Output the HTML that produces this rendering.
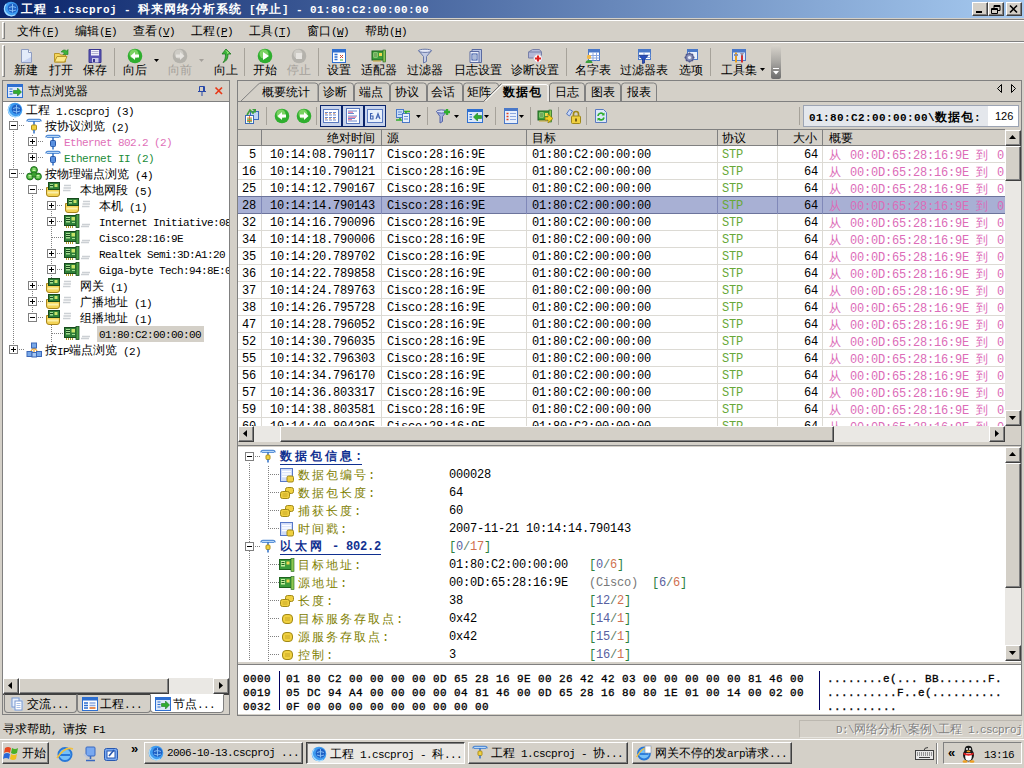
<!DOCTYPE html><html><head><meta charset="utf-8"><title>Colasoft</title><style>
*{box-sizing:border-box;margin:0;padding:0}
html,body{width:1024px;height:768px;overflow:hidden;background:#D4D0C8}
body{position:relative;font-family:"Liberation Mono",monospace;font-size:10px;color:#000;line-height:12px}
.a{position:absolute}
.c{font-family:"Liberation Sans",sans-serif;font-size:12px;letter-spacing:0}
.tr .c{position:relative;top:-1px}
.s{font-family:"Liberation Mono",monospace;font-size:11px;letter-spacing:-.6px;white-space:nowrap;line-height:12px}
.m{font-family:"Liberation Mono",monospace;font-size:12px;letter-spacing:-0.2px;white-space:nowrap}
.m .c{letter-spacing:2px}
.b{font-weight:bold}
.raised{border:1px solid;border-color:#fff #404040 #404040 #fff;box-shadow:inset -1px -1px 0 #808080,inset 1px 1px 0 #D4D0C8;background:#D4D0C8}
.sunken{border:1px solid;border-color:#808080 #fff #fff #808080}
.dither{background:#EAE8E4}
svg{position:absolute;overflow:visible}
</style></head><body>
<div class="a" style="left:0;top:0;width:1024px;height:18px;background:linear-gradient(90deg,#0A246A,#A6CAF0)"></div>
<div class="a" style="left:0;top:19px;width:1024px;height:1px;background:#808080"></div><div class="a" style="left:0;top:20px;width:1024px;height:1px;background:#fff"></div>
<svg style="left:3px;top:1px" width="16" height="16" viewBox="0 0 16 16"><circle cx="8" cy="8" r="7.300" fill="#3E9CF0"/><circle cx="9.500" cy="7.200" r="4.800" fill="#1E60C4"/><path d="M6 6.500q3.500-2 7 0M6 9q3.500 2 7 0M9.500 3v8.500" stroke="#8CC4F8" stroke-width=".9" fill="none"/><path d="M3.200 3.200a7 7 0 0 0 9 10.500" stroke="#A8DCFF" stroke-width="1.300" fill="none"/></svg>
<div class="a b" style="left:21px;top:3px;color:#fff;font-size:11px;letter-spacing:0.4px;white-space:nowrap;line-height:12px"><span class="c" style="letter-spacing:1px;font-weight:bold">工程</span>&nbsp;1.cscproj&nbsp;-&nbsp;<span class="c" style="letter-spacing:1px;font-weight:bold">科来网络分析系统</span>&nbsp;[<span class="c" style="letter-spacing:1px;font-weight:bold">停止</span>]&nbsp;-&nbsp;01:80:C2:00:00:00</div>
<div class="a raised" style="left:972px;top:2px;width:16px;height:14px"></div>
<div class="a" style="left:976px;top:11px;width:6px;height:2px;background:#000"></div>
<div class="a raised" style="left:988px;top:2px;width:16px;height:14px"></div>
<svg style="left:988px;top:2px" width="16" height="14"><path d="M6 3.5h6v5h-6zM6 4.5h6" stroke="#000" fill="none"/><path d="M3.5 6.5h6v5h-6z" fill="#D4D0C8" stroke="#000"/><path d="M3.5 7.5h6" stroke="#000"/></svg>
<div class="a raised" style="left:1006px;top:2px;width:16px;height:14px"></div>
<svg style="left:1006px;top:2px" width="16" height="14"><path d="M4 3.5l7 7M11 3.5l-7 7" stroke="#000" stroke-width="1.6"/></svg>
<div class="a" style="left:0;top:41px;width:1024px;height:1px;background:#808080"></div><div class="a" style="left:0;top:42px;width:1024px;height:1px;background:#fff"></div>
<div class="a" style="left:2px;top:22px;width:3px;height:17px;border:1px solid;border-color:#fff #808080 #808080 #fff"></div>
<div class="a s" style="left:17px;top:25px"><span class="c">文件</span>(<u>F</u>)</div>
<div class="a s" style="left:75px;top:25px"><span class="c">编辑</span>(<u>E</u>)</div>
<div class="a s" style="left:133px;top:25px"><span class="c">查看</span>(<u>V</u>)</div>
<div class="a s" style="left:191px;top:25px"><span class="c">工程</span>(<u>P</u>)</div>
<div class="a s" style="left:249px;top:25px"><span class="c">工具</span>(<u>T</u>)</div>
<div class="a s" style="left:307px;top:25px"><span class="c">窗口</span>(<u>W</u>)</div>
<div class="a s" style="left:365px;top:25px"><span class="c">帮助</span>(<u>H</u>)</div>
<div class="a" style="left:2px;top:45px;width:3px;height:32px;border:1px solid;border-color:#fff #808080 #808080 #fff"></div>
<div class="a" style="left:114px;top:48px;width:1px;height:28px;background:#A6A29A"></div>
<div class="a" style="left:244px;top:48px;width:1px;height:28px;background:#A6A29A"></div>
<div class="a" style="left:318px;top:48px;width:1px;height:28px;background:#A6A29A"></div>
<div class="a" style="left:566px;top:48px;width:1px;height:28px;background:#A6A29A"></div>
<div class="a" style="left:710px;top:48px;width:1px;height:28px;background:#A6A29A"></div>
<svg style="left:18px;top:48px" width="16" height="16" viewBox="0 0 16 16" ><path d="M3.5 1.5h7l3 3v10h-10z" fill="#E3EBFA" stroke="#8E9CC0"/><path d="M10.5 1.5v3h3" fill="#fff" stroke="#8E9CC0"/><path d="M4 14h9V9z" fill="#B9C8EC" opacity=".7"/></svg>
<div class="a c" style="left:14px;top:64px;color:#000;white-space:nowrap;line-height:12px">新建</div>
<svg style="left:53px;top:48px" width="16" height="16" viewBox="0 0 16 16" ><path d="M1.5 5.5h5l1 1.5h5v7h-11z" fill="#F5D65A" stroke="#B8962A"/><path d="M1.5 14l2.5-5.5h10l-2.5 5.5z" fill="#FBE88A" stroke="#B8962A"/><path d="M8 4c2-2.5 4-2.5 5.5-1l1.5-1.5v5h-5l1.5-1.5c-1-1-2-1-3.5-1z" fill="#3CB43C" stroke="#1E7A1E" stroke-width=".6"/></svg>
<div class="a c" style="left:49px;top:64px;color:#000;white-space:nowrap;line-height:12px">打开</div>
<svg style="left:87px;top:48px" width="16" height="16" viewBox="0 0 16 16" ><path d="M2 1.5h12v13h-12z" fill="#5A55B4" stroke="#3A3690"/><rect x="4" y="2" width="8" height="5.5" fill="#F2F2FA"/><path d="M4.5 3.5h7M4.5 5.5h7" stroke="#B0B0D0"/><rect x="5" y="10" width="6.5" height="4.5" fill="#C8C8E8"/><rect x="6" y="11" width="2" height="3" fill="#3A3690"/></svg>
<div class="a c" style="left:83px;top:64px;color:#000;white-space:nowrap;line-height:12px">保存</div>
<svg style="left:127px;top:48px" width="16" height="16" viewBox="0 0 16 16" ><circle cx="8" cy="8" r="7.3" fill="#2FAE2F"/><circle cx="7" cy="6" r="4.5" fill="#B8F08C" opacity=".55"/><path d="M3.5 8l4.5-4v2.5h4v3h-4v2.5z" fill="#fff"/></svg>
<div class="a c" style="left:123px;top:64px;color:#000;white-space:nowrap;line-height:12px">向后</div>
<svg style="left:172px;top:48px" width="16" height="16" viewBox="0 0 16 16" ><circle cx="8" cy="8" r="7.3" fill="#B4B2AC"/><circle cx="7" cy="6" r="4.5" fill="#E4E2DC" opacity=".55"/><path d="M12.5 8l-4.5-4v2.5h-4v3h4v2.5z" fill="#E6E4E0"/></svg>
<div class="a c" style="left:168px;top:64px;color:#A4A09A;white-space:nowrap;line-height:12px">向前</div>
<svg style="left:218px;top:48px" width="16" height="16" viewBox="0 0 16 16" ><path d="M8 1l5 5h-3c0 4-1 7-5 8.500c2-2 2.500-4.500 2.500-8.500h-3.500z" fill="#3CB43C" stroke="#1E7A1E" stroke-width=".8"/><path d="M8 2.500l2.500 2.500h-1.500" stroke="#B8F08C" fill="none"/></svg>
<div class="a c" style="left:214px;top:64px;color:#000;white-space:nowrap;line-height:12px">向上</div>
<svg style="left:257px;top:48px" width="16" height="16" viewBox="0 0 16 16" ><circle cx="8" cy="8" r="7.3" fill="#2FAE2F"/><circle cx="7" cy="6" r="4.5" fill="#B8F08C" opacity=".55"/><path d="M6 4l6 4l-6 4z" fill="#fff"/></svg>
<div class="a c" style="left:253px;top:64px;color:#000;white-space:nowrap;line-height:12px">开始</div>
<svg style="left:291px;top:48px" width="16" height="16" viewBox="0 0 16 16" ><circle cx="8" cy="8" r="7.3" fill="#B4B2AC"/><circle cx="7" cy="6" r="4.5" fill="#E4E2DC" opacity=".55"/><rect x="5" y="5" width="6" height="6" fill="#E6E4E0"/></svg>
<div class="a c" style="left:287px;top:64px;color:#A4A09A;white-space:nowrap;line-height:12px">停止</div>
<svg style="left:331px;top:48px" width="16" height="16" viewBox="0 0 16 16" ><rect x="1.500" y="1.500" width="13" height="13" fill="#fff" stroke="#2E6FD0"/><rect x="1.500" y="1.500" width="13" height="3" fill="#2E6FD0"/><path d="M3.500 6.500h3M3.500 9h3M3.500 11.500h3" stroke="#2E6FD0" stroke-width="1.500"/><path d="M9 7l3 3M12 7l-3 3" stroke="#D04A2E"/><path d="M9 12h3" stroke="#3CB43C"/></svg>
<div class="a c" style="left:327px;top:64px;color:#000;white-space:nowrap;line-height:12px">设置</div>
<svg style="left:371px;top:48px" width="16" height="16" viewBox="0 0 16 16" ><rect x="1" y="3" width="13" height="9" fill="#3C9C3C" stroke="#1E641E"/><rect x="2.500" y="4.500" width="4" height="5" fill="#C8F0A0"/><path d="M3 6h3M3 8h3" stroke="#1E641E"/><rect x="8" y="5" width="3" height="3" fill="#F0D850"/><rect x="12" y="2" width="2.500" height="12" fill="#8CC850" stroke="#1E641E" stroke-width=".6"/><path d="M3 12v2M5 12v2M7 12v2M9 12v2" stroke="#C8A830"/></svg>
<div class="a c" style="left:361px;top:64px;color:#000;white-space:nowrap;line-height:12px">适配器</div>
<svg style="left:417px;top:48px" width="16" height="16" viewBox="0 0 16 16" ><path d="M1.500 2.500h13l-5 6v5l-3 1.500v-6.500z" fill="#C4CCE4" stroke="#6878A8"/><ellipse cx="8" cy="2.800" rx="6.500" ry="1.600" fill="#E8ECF8" stroke="#6878A8"/></svg>
<div class="a c" style="left:407px;top:64px;color:#000;white-space:nowrap;line-height:12px">过滤器</div>
<svg style="left:468px;top:48px" width="16" height="16" viewBox="0 0 16 16" ><path d="M4 1.500h9.500v13h-9.500z" fill="#B8C4E4" stroke="#5A6AA0"/><path d="M2 3.500h9v11h-9z" fill="#E8ECF8" stroke="#5A6AA0"/><rect x="4" y="6" width="5" height="6" fill="#fff" stroke="#2E50A0"/><path d="M5 8h3M5 10h3" stroke="#2E50A0" stroke-width=".8"/></svg>
<div class="a c" style="left:454px;top:64px;color:#000;white-space:nowrap;line-height:12px">日志设置</div>
<svg style="left:527px;top:48px" width="16" height="16" viewBox="0 0 16 16" ><path d="M1.500 4l4-2.500h7l2 2.500v6h-13z" fill="#B4B8D8" stroke="#7880A8"/><path d="M1.500 4h13" stroke="#7880A8"/><circle cx="11" cy="10.500" r="4.200" fill="#fff" stroke="#C8C8D8"/><path d="M11 7.500v6M8 10.500h6" stroke="#E02020" stroke-width="2.200"/></svg>
<div class="a c" style="left:511px;top:64px;color:#000;white-space:nowrap;line-height:12px">诊断设置</div>
<svg style="left:585px;top:48px" width="16" height="16" viewBox="0 0 16 16" ><rect x="3.500" y="1.500" width="11" height="11" fill="#fff" stroke="#4A78C8"/><rect x="3.500" y="1.500" width="11" height="3" fill="#4A78C8"/><path d="M3.500 7.500h11M3.500 10h11M8 4.500v8M11.500 4.500v8" stroke="#8CA8E0"/><circle cx="4" cy="9" r="2.200" fill="#F0B848"/><path d="M.500 15c0-4 7-4 7 0z" fill="#3CA03C"/></svg>
<div class="a c" style="left:575px;top:64px;color:#000;white-space:nowrap;line-height:12px">名字表</div>
<svg style="left:636px;top:48px" width="16" height="16" viewBox="0 0 16 16" ><rect x="2.500" y="1.500" width="12" height="10" fill="#fff" stroke="#4A78C8"/><rect x="2.500" y="1.500" width="12" height="3" fill="#4A78C8"/><path d="M2.500 7h12M2.500 9.500h12M8 4.500v7" stroke="#8CA8E0"/><path d="M3 7.500h9l-3.500 4v3.500l-2 .500v-4z" fill="#2850C0" stroke="#102880" stroke-width=".7"/></svg>
<div class="a c" style="left:620px;top:64px;color:#000;white-space:nowrap;line-height:12px">过滤器表</div>
<svg style="left:683px;top:48px" width="16" height="16" viewBox="0 0 16 16" ><rect x="4.500" y="1.500" width="10" height="10" fill="#E8F0FC" stroke="#4A78C8"/><rect x="4.500" y="1.500" width="10" height="2.500" fill="#4A78C8"/><circle cx="6.500" cy="9.500" r="4" fill="#8890B8" stroke="#50588C"/><circle cx="6.500" cy="9.500" r="1.600" fill="#E8ECF8"/><path d="M6.500 4.500v2M6.500 12.500v2M1.500 9.500h2M9.500 9.500h2M3 6l1.300 1.300M10 13l-1.300-1.300M3 13l1.300-1.300M10 6l-1.300 1.300" stroke="#50588C" stroke-width="1.400"/></svg>
<div class="a c" style="left:679px;top:64px;color:#000;white-space:nowrap;line-height:12px">选项</div>
<svg style="left:731px;top:48px" width="16" height="16" viewBox="0 0 16 16" ><rect x="1.500" y="1.500" width="13" height="11" fill="#D8E6FA" stroke="#4A78C8"/><rect x="1.500" y="1.500" width="13" height="3" fill="#4A78C8"/><path d="M5 4.500v10" stroke="#E8A020" stroke-width="2"/><path d="M3 6h4v2h-4z" fill="#8890A8"/><path d="M11 5.500v9" stroke="#D03030" stroke-width="2"/><path d="M9.500 5l1.500 2l1.500-2" fill="none" stroke="#8890A8" stroke-width="1.200"/></svg>
<div class="a c" style="left:721px;top:64px;color:#000;white-space:nowrap;line-height:12px">工具集</div>
<svg style="left:154px;top:59px" width="5" height="3"><path d="M0 0h5l-2.500 3z" fill="#000"/></svg>
<svg style="left:199px;top:59px" width="5" height="3"><path d="M0 0h5l-2.500 3z" fill="#A4A09A"/></svg>
<svg style="left:760px;top:68px" width="5" height="3"><path d="M0 0h5l-2.500 3z" fill="#000"/></svg>
<div class="a" style="left:771px;top:45px;width:10px;height:34px;background:linear-gradient(180deg,#D8D4CC 0%,#A8A6A2 50%,#6C6C6C 100%);border-radius:2px"></div>
<svg style="left:773px;top:68px" width="6" height="8"><path d="M0 .500h6" stroke="#fff"/><path d="M0 3h6l-3 3.500z" fill="#fff"/></svg>
<div class="a" style="left:2px;top:80px;width:228px;height:22px;border:1px solid #808080;border-bottom:none;background:#D4D0C8"></div>
<svg style="left:7px;top:83px" width="16" height="16" viewBox="0 0 16 16" ><rect x=".500" y="1.500" width="15" height="13" fill="#DCE8FA" stroke="#2E6FD0"/><rect x=".500" y="1.500" width="15" height="2.500" fill="#2E6FD0"/><path d="M2.500 6h3M2.500 8.500h3M2.500 11h3" stroke="#2E6FD0"/><path d="M6.500 7.500h4v-2.500l4 4l-4 4v-2.500h-4z" fill="#2FAE2F" stroke="#1E7A1E" stroke-width=".6"/></svg>
<div class="a c" style="left:28px;top:85px;line-height:12px;white-space:nowrap">节点浏览器</div>
<svg style="left:197px;top:85px" width="10" height="12"><path d="M2.500 1.500h5v5h-5zM6.500 1.500v5M1 6.500h8M5 7v4" stroke="#2848A8" fill="none"/></svg>
<svg style="left:214px;top:86px" width="10" height="10"><path d="M1.500 1.500l6.500 6.500M8 1.500l-6.500 6.500" stroke="#E83818" stroke-width="1.700"/></svg>
<div class="a" style="left:2px;top:101px;width:228px;height:614px;border:1px solid #808080;background:#D4D0C8"></div>
<div class="a" style="left:3px;top:102px;width:226px;height:576px;background:#fff;overflow:hidden">
<div class="a" style="left:10px;top:17px;width:1px;height:230px;background:repeating-linear-gradient(180deg,#808080 0 1px,transparent 1px 2px)"></div>
<div class="a" style="left:29px;top:33px;width:1px;height:24px;background:repeating-linear-gradient(180deg,#808080 0 1px,transparent 1px 2px)"></div>
<div class="a" style="left:29px;top:89px;width:1px;height:130px;background:repeating-linear-gradient(180deg,#808080 0 1px,transparent 1px 2px)"></div>
<div class="a" style="left:48px;top:105px;width:1px;height:76px;background:repeating-linear-gradient(180deg,#808080 0 1px,transparent 1px 2px)"></div>
<div class="a" style="left:48px;top:217px;width:1px;height:24px;background:repeating-linear-gradient(180deg,#808080 0 1px,transparent 1px 2px)"></div>
<svg style="left:4px;top:0px" width="16" height="16" viewBox="0 0 16 16" ><circle cx="8" cy="8" r="7.300" fill="#3E9CF0"/><circle cx="9.500" cy="7.200" r="4.800" fill="#1E60C4"/><path d="M6 6.500q3.500-2 7 0M6 9q3.500 2 7 0M9.500 3v8.500" stroke="#8CC4F8" stroke-width=".9" fill="none"/><path d="M3.200 3.200a7 7 0 0 0 9 10.500" stroke="#A8DCFF" stroke-width="1.300" fill="none"/></svg>
<div class="a s tr" style="left:23px;top:3px;color:#000"><span class="c">工程</span>&nbsp;1.cscproj&nbsp;(3)</div>
<div class="a" style="left:6px;top:19px;width:9px;height:9px;border:1px solid #808080;background:#fff"></div><div class="a" style="left:8px;top:23px;width:5px;height:1px;background:#000"></div>
<div class="a" style="left:16px;top:23px;width:6px;height:1px;background:repeating-linear-gradient(90deg,#808080 0 1px,transparent 1px 2px)"></div>
<svg style="left:23px;top:16px" width="16" height="16" viewBox="0 0 16 16" ><path d="M1 3.500q0-2 2-2h10q2 0 2 2" stroke="#4C88D4" stroke-width="1.400" fill="none"/><path d="M2.500 2.500h11" stroke="#B8D8F8" stroke-width="1.200"/><path d="M2 3.500h12" stroke="#4C88D4" stroke-width=".9"/><path d="M8 3v4" stroke="#3C78C8" stroke-width="1.600"/><rect x="5.500" y="7" width="5" height="5" rx="1" fill="#F0D040" stroke="#B09018"/><path d="M8 12v3.500" stroke="#3C78C8" stroke-width="1.600"/></svg>
<div class="a s tr" style="left:42px;top:19px;color:#000"><span class="c">按协议浏览</span>&nbsp;(2)</div>
<div class="a" style="left:25px;top:35px;width:9px;height:9px;border:1px solid #808080;background:#fff"></div><div class="a" style="left:27px;top:39px;width:5px;height:1px;background:#000"></div><div class="a" style="left:29px;top:37px;width:1px;height:5px;background:#000"></div>
<div class="a" style="left:35px;top:39px;width:6px;height:1px;background:repeating-linear-gradient(90deg,#808080 0 1px,transparent 1px 2px)"></div>
<svg style="left:42px;top:32px" width="16" height="16" viewBox="0 0 16 16" ><path d="M1 3.500q0-2 2-2h10q2 0 2 2" stroke="#4C88D4" stroke-width="1.400" fill="none"/><path d="M2.500 2.500h11" stroke="#B8D8F8" stroke-width="1.200"/><path d="M2 3.500h12" stroke="#4C88D4" stroke-width=".9"/><path d="M8 3v4" stroke="#3C78C8" stroke-width="1.600"/><rect x="5.500" y="6.500" width="5" height="6" rx="1" fill="#5890E0" stroke="#2858A8"/><path d="M8 12.500v3" stroke="#3C78C8" stroke-width="1.600"/></svg>
<div class="a s tr" style="left:61px;top:35px;color:#E070B8">Ethernet&nbsp;802.2&nbsp;(2)</div>
<div class="a" style="left:25px;top:51px;width:9px;height:9px;border:1px solid #808080;background:#fff"></div><div class="a" style="left:27px;top:55px;width:5px;height:1px;background:#000"></div><div class="a" style="left:29px;top:53px;width:1px;height:5px;background:#000"></div>
<div class="a" style="left:35px;top:55px;width:6px;height:1px;background:repeating-linear-gradient(90deg,#808080 0 1px,transparent 1px 2px)"></div>
<svg style="left:42px;top:48px" width="16" height="16" viewBox="0 0 16 16" ><path d="M1 3.500q0-2 2-2h10q2 0 2 2" stroke="#4C88D4" stroke-width="1.400" fill="none"/><path d="M2.500 2.500h11" stroke="#B8D8F8" stroke-width="1.200"/><path d="M2 3.500h12" stroke="#4C88D4" stroke-width=".9"/><path d="M8 3v4" stroke="#3C78C8" stroke-width="1.600"/><rect x="5.500" y="6.500" width="5" height="6" rx="1" fill="#5890E0" stroke="#2858A8"/><path d="M8 12.500v3" stroke="#3C78C8" stroke-width="1.600"/></svg>
<div class="a s tr" style="left:61px;top:51px;color:#208C38">Ethernet&nbsp;II&nbsp;(2)</div>
<div class="a" style="left:6px;top:67px;width:9px;height:9px;border:1px solid #808080;background:#fff"></div><div class="a" style="left:8px;top:71px;width:5px;height:1px;background:#000"></div>
<div class="a" style="left:16px;top:71px;width:6px;height:1px;background:repeating-linear-gradient(90deg,#808080 0 1px,transparent 1px 2px)"></div>
<svg style="left:23px;top:64px" width="16" height="16" viewBox="0 0 16 16" ><circle cx="8" cy="4" r="3.400" fill="#4CB83C" stroke="#1E6A1E"/><circle cx="4" cy="10.500" r="3.400" fill="#4CB83C" stroke="#1E6A1E"/><circle cx="12" cy="10.500" r="3.400" fill="#4CB83C" stroke="#1E6A1E"/><circle cx="8" cy="8.500" r="2.600" fill="#3CA030" stroke="#1E6A1E" stroke-width=".7"/><path d="M6.500 3h3M2.500 9.500h3M10.500 9.500h3M6.500 4.500h3M2.500 11h3M10.500 11h3" stroke="#D8F8B8" stroke-width=".9"/></svg>
<div class="a s tr" style="left:42px;top:67px;color:#000"><span class="c">按物理端点浏览</span>&nbsp;(4)</div>
<div class="a" style="left:25px;top:83px;width:9px;height:9px;border:1px solid #808080;background:#fff"></div><div class="a" style="left:27px;top:87px;width:5px;height:1px;background:#000"></div>
<div class="a" style="left:35px;top:87px;width:6px;height:1px;background:repeating-linear-gradient(90deg,#808080 0 1px,transparent 1px 2px)"></div>
<svg style="left:42px;top:80px" width="32" height="16" viewBox="0 0 32 16" ><path d="M1.500 5.500h13v6.500q0 2.500-2.500 2.500h-8q-2.500 0-2.500-2.500z" fill="#F4D456" stroke="#A8841C"/><path d="M2.500 10.500h11" stroke="#FBEFA8" stroke-width="2"/><rect x="3.500" y=".500" width="11" height="7" fill="#2F8038" stroke="#174A1C"/><rect x="5" y="2" width="3" height="3.500" fill="#A4DC90"/><path d="M5 3.500h3" stroke="#174A1C"/><rect x="9.500" y="2" width="3" height="3" fill="#C8E468"/><path d="M19 3.500h7M18.500 6h7.500M18 8.500h7.500" stroke="#CCD0D4" stroke-width="1.300"/></svg>
<div class="a s tr" style="left:77px;top:83px;color:#000"><span class="c">本地网段</span>&nbsp;(5)</div>
<div class="a" style="left:44px;top:99px;width:9px;height:9px;border:1px solid #808080;background:#fff"></div><div class="a" style="left:46px;top:103px;width:5px;height:1px;background:#000"></div><div class="a" style="left:48px;top:101px;width:1px;height:5px;background:#000"></div>
<div class="a" style="left:54px;top:103px;width:6px;height:1px;background:repeating-linear-gradient(90deg,#808080 0 1px,transparent 1px 2px)"></div>
<svg style="left:61px;top:96px" width="32" height="16" viewBox="0 0 32 16" ><path d="M1.500 5.500h13v6.500q0 2.500-2.500 2.500h-8q-2.500 0-2.500-2.500z" fill="#F4D456" stroke="#A8841C"/><path d="M2.500 10.500h11" stroke="#FBEFA8" stroke-width="2"/><rect x="3.500" y=".500" width="11" height="7" fill="#2F8038" stroke="#174A1C"/><rect x="5" y="2" width="3" height="3.500" fill="#A4DC90"/><path d="M5 3.500h3" stroke="#174A1C"/><rect x="9.500" y="2" width="3" height="3" fill="#C8E468"/><path d="M19 3.500h7M18.500 6h7.500M18 8.500h7.500" stroke="#CCD0D4" stroke-width="1.300"/></svg>
<div class="a s tr" style="left:96px;top:99px;color:#000"><span class="c">本机</span>&nbsp;(1)</div>
<div class="a" style="left:44px;top:115px;width:9px;height:9px;border:1px solid #808080;background:#fff"></div><div class="a" style="left:46px;top:119px;width:5px;height:1px;background:#000"></div><div class="a" style="left:48px;top:117px;width:1px;height:5px;background:#000"></div>
<div class="a" style="left:54px;top:119px;width:6px;height:1px;background:repeating-linear-gradient(90deg,#808080 0 1px,transparent 1px 2px)"></div>
<svg style="left:61px;top:112px" width="32" height="16" viewBox="0 0 32 16" ><rect x=".500" y="1.500" width="12.500" height="10" fill="#2F8038" stroke="#174A1C"/><rect x="2" y="3" width="4" height="5.500" fill="#A4DC90"/><path d="M2 4.500h4M2 6.500h4" stroke="#174A1C"/><rect x="7.500" y="3" width="3.500" height="3.500" fill="#C8E468"/><path d="M8 8.500h3" stroke="#A4DC90"/><rect x="12" y=".500" width="3" height="13" fill="#4CA048" stroke="#174A1C" stroke-width=".8"/><path d="M2.500 12v2M4.500 12v2M6.500 12v2M8.500 12v2" stroke="#B09828"/><path d="M18 10.500h8M17 12.500h8" stroke="#CCD0D4" stroke-width="1.300"/></svg>
<div class="a s tr" style="left:96px;top:115px;color:#000">Internet&nbsp;Initiative:08</div>
<div class="a" style="left:49px;top:135px;width:11px;height:1px;background:repeating-linear-gradient(90deg,#808080 0 1px,transparent 1px 2px)"></div>
<svg style="left:61px;top:128px" width="32" height="16" viewBox="0 0 32 16" ><rect x=".500" y="1.500" width="12.500" height="10" fill="#2F8038" stroke="#174A1C"/><rect x="2" y="3" width="4" height="5.500" fill="#A4DC90"/><path d="M2 4.500h4M2 6.500h4" stroke="#174A1C"/><rect x="7.500" y="3" width="3.500" height="3.500" fill="#C8E468"/><path d="M8 8.500h3" stroke="#A4DC90"/><rect x="12" y=".500" width="3" height="13" fill="#4CA048" stroke="#174A1C" stroke-width=".8"/><path d="M2.500 12v2M4.500 12v2M6.500 12v2M8.500 12v2" stroke="#B09828"/><path d="M18 10.500h8M17 12.500h8" stroke="#CCD0D4" stroke-width="1.300"/></svg>
<div class="a s tr" style="left:96px;top:131px;color:#000">Cisco:28:16:9E</div>
<div class="a" style="left:44px;top:147px;width:9px;height:9px;border:1px solid #808080;background:#fff"></div><div class="a" style="left:46px;top:151px;width:5px;height:1px;background:#000"></div><div class="a" style="left:48px;top:149px;width:1px;height:5px;background:#000"></div>
<div class="a" style="left:54px;top:151px;width:6px;height:1px;background:repeating-linear-gradient(90deg,#808080 0 1px,transparent 1px 2px)"></div>
<svg style="left:61px;top:144px" width="32" height="16" viewBox="0 0 32 16" ><rect x=".500" y="1.500" width="12.500" height="10" fill="#2F8038" stroke="#174A1C"/><rect x="2" y="3" width="4" height="5.500" fill="#A4DC90"/><path d="M2 4.500h4M2 6.500h4" stroke="#174A1C"/><rect x="7.500" y="3" width="3.500" height="3.500" fill="#C8E468"/><path d="M8 8.500h3" stroke="#A4DC90"/><rect x="12" y=".500" width="3" height="13" fill="#4CA048" stroke="#174A1C" stroke-width=".8"/><path d="M2.500 12v2M4.500 12v2M6.500 12v2M8.500 12v2" stroke="#B09828"/><path d="M18 10.500h8M17 12.500h8" stroke="#CCD0D4" stroke-width="1.300"/></svg>
<div class="a s tr" style="left:96px;top:147px;color:#000">Realtek&nbsp;Semi:3D:A1:20</div>
<div class="a" style="left:44px;top:163px;width:9px;height:9px;border:1px solid #808080;background:#fff"></div><div class="a" style="left:46px;top:167px;width:5px;height:1px;background:#000"></div><div class="a" style="left:48px;top:165px;width:1px;height:5px;background:#000"></div>
<div class="a" style="left:54px;top:167px;width:6px;height:1px;background:repeating-linear-gradient(90deg,#808080 0 1px,transparent 1px 2px)"></div>
<svg style="left:61px;top:160px" width="32" height="16" viewBox="0 0 32 16" ><rect x=".500" y="1.500" width="12.500" height="10" fill="#2F8038" stroke="#174A1C"/><rect x="2" y="3" width="4" height="5.500" fill="#A4DC90"/><path d="M2 4.500h4M2 6.500h4" stroke="#174A1C"/><rect x="7.500" y="3" width="3.500" height="3.500" fill="#C8E468"/><path d="M8 8.500h3" stroke="#A4DC90"/><rect x="12" y=".500" width="3" height="13" fill="#4CA048" stroke="#174A1C" stroke-width=".8"/><path d="M2.500 12v2M4.500 12v2M6.500 12v2M8.500 12v2" stroke="#B09828"/><path d="M18 10.500h8M17 12.500h8" stroke="#CCD0D4" stroke-width="1.300"/></svg>
<div class="a s tr" style="left:96px;top:163px;color:#000">Giga-byte&nbsp;Tech:94:8E:0</div>
<div class="a" style="left:25px;top:179px;width:9px;height:9px;border:1px solid #808080;background:#fff"></div><div class="a" style="left:27px;top:183px;width:5px;height:1px;background:#000"></div><div class="a" style="left:29px;top:181px;width:1px;height:5px;background:#000"></div>
<div class="a" style="left:35px;top:183px;width:6px;height:1px;background:repeating-linear-gradient(90deg,#808080 0 1px,transparent 1px 2px)"></div>
<svg style="left:42px;top:176px" width="32" height="16" viewBox="0 0 32 16" ><path d="M1.500 5.500h13v6.500q0 2.500-2.500 2.500h-8q-2.500 0-2.500-2.500z" fill="#F4D456" stroke="#A8841C"/><path d="M2.500 10.500h11" stroke="#FBEFA8" stroke-width="2"/><rect x="3.500" y=".500" width="11" height="7" fill="#2F8038" stroke="#174A1C"/><rect x="5" y="2" width="3" height="3.500" fill="#A4DC90"/><path d="M5 3.500h3" stroke="#174A1C"/><rect x="9.500" y="2" width="3" height="3" fill="#C8E468"/><path d="M19 3.500h7M18.500 6h7.500M18 8.500h7.500" stroke="#CCD0D4" stroke-width="1.300"/></svg>
<div class="a s tr" style="left:77px;top:179px;color:#000"><span class="c">网关</span>&nbsp;(1)</div>
<div class="a" style="left:25px;top:195px;width:9px;height:9px;border:1px solid #808080;background:#fff"></div><div class="a" style="left:27px;top:199px;width:5px;height:1px;background:#000"></div><div class="a" style="left:29px;top:197px;width:1px;height:5px;background:#000"></div>
<div class="a" style="left:35px;top:199px;width:6px;height:1px;background:repeating-linear-gradient(90deg,#808080 0 1px,transparent 1px 2px)"></div>
<svg style="left:42px;top:192px" width="32" height="16" viewBox="0 0 32 16" ><path d="M1.500 5.500h13v6.500q0 2.500-2.500 2.500h-8q-2.500 0-2.500-2.500z" fill="#F4D456" stroke="#A8841C"/><path d="M2.500 10.500h11" stroke="#FBEFA8" stroke-width="2"/><rect x="3.500" y=".500" width="11" height="7" fill="#2F8038" stroke="#174A1C"/><rect x="5" y="2" width="3" height="3.500" fill="#A4DC90"/><path d="M5 3.500h3" stroke="#174A1C"/><rect x="9.500" y="2" width="3" height="3" fill="#C8E468"/><path d="M19 3.500h7M18.500 6h7.500M18 8.500h7.500" stroke="#CCD0D4" stroke-width="1.300"/></svg>
<div class="a s tr" style="left:77px;top:195px;color:#000"><span class="c">广播地址</span>&nbsp;(1)</div>
<div class="a" style="left:25px;top:211px;width:9px;height:9px;border:1px solid #808080;background:#fff"></div><div class="a" style="left:27px;top:215px;width:5px;height:1px;background:#000"></div>
<div class="a" style="left:35px;top:215px;width:6px;height:1px;background:repeating-linear-gradient(90deg,#808080 0 1px,transparent 1px 2px)"></div>
<svg style="left:42px;top:208px" width="32" height="16" viewBox="0 0 32 16" ><path d="M1.500 5.500h13v6.500q0 2.500-2.500 2.500h-8q-2.500 0-2.500-2.500z" fill="#F4D456" stroke="#A8841C"/><path d="M2.500 10.500h11" stroke="#FBEFA8" stroke-width="2"/><rect x="3.500" y=".500" width="11" height="7" fill="#2F8038" stroke="#174A1C"/><rect x="5" y="2" width="3" height="3.500" fill="#A4DC90"/><path d="M5 3.500h3" stroke="#174A1C"/><rect x="9.500" y="2" width="3" height="3" fill="#C8E468"/><path d="M19 3.500h7M18.500 6h7.500M18 8.500h7.500" stroke="#CCD0D4" stroke-width="1.300"/></svg>
<div class="a s tr" style="left:77px;top:211px;color:#000"><span class="c">组播地址</span>&nbsp;(1)</div>
<div class="a" style="left:49px;top:231px;width:11px;height:1px;background:repeating-linear-gradient(90deg,#808080 0 1px,transparent 1px 2px)"></div>
<svg style="left:61px;top:224px" width="32" height="16" viewBox="0 0 32 16" ><rect x=".500" y="1.500" width="12.500" height="10" fill="#2F8038" stroke="#174A1C"/><rect x="2" y="3" width="4" height="5.500" fill="#A4DC90"/><path d="M2 4.500h4M2 6.500h4" stroke="#174A1C"/><rect x="7.500" y="3" width="3.500" height="3.500" fill="#C8E468"/><path d="M8 8.500h3" stroke="#A4DC90"/><rect x="12" y=".500" width="3" height="13" fill="#4CA048" stroke="#174A1C" stroke-width=".8"/><path d="M2.500 12v2M4.500 12v2M6.500 12v2M8.500 12v2" stroke="#B09828"/><path d="M18 10.500h8M17 12.500h8" stroke="#CCD0D4" stroke-width="1.300"/></svg>
<div class="a" style="left:94px;top:224px;width:107px;height:16px;background:#D4D0C8"></div>
<div class="a s tr" style="left:96px;top:227px;color:#000">01:80:C2:00:00:00</div>
<div class="a" style="left:6px;top:243px;width:9px;height:9px;border:1px solid #808080;background:#fff"></div><div class="a" style="left:8px;top:247px;width:5px;height:1px;background:#000"></div><div class="a" style="left:10px;top:245px;width:1px;height:5px;background:#000"></div>
<div class="a" style="left:16px;top:247px;width:6px;height:1px;background:repeating-linear-gradient(90deg,#808080 0 1px,transparent 1px 2px)"></div>
<svg style="left:23px;top:240px" width="16" height="16" viewBox="0 0 16 16" ><path d="M8 5L3.500 11M8 5l4.500 6M8 5v7" stroke="#F0A020" stroke-width="1.200"/><rect x="5.500" y="1" width="5" height="5" fill="#78A8E8" stroke="#3C68B8"/><rect x="1" y="9.500" width="5" height="5" fill="#78A8E8" stroke="#3C68B8"/><rect x="6" y="10.500" width="4.500" height="4.500" fill="#A8C8F0" stroke="#3C68B8"/><rect x="10.500" y="9.500" width="5" height="5" fill="#78A8E8" stroke="#3C68B8"/></svg>
<div class="a s tr" style="left:42px;top:243px;color:#000"><span class="c">按</span>IP<span class="c">端点浏览</span>&nbsp;(2)</div>
</div>
<div class="a dither" style="left:3px;top:678px;width:226px;height:16px"></div>
<div class="a raised" style="left:3px;top:678px;width:16px;height:16px"></div><svg style="left:3px;top:678px" width="16" height="16"><path d="M9 4v7l-4-3.500z" fill="#000"/></svg>
<div class="a raised" style="left:213px;top:678px;width:16px;height:16px"></div><svg style="left:213px;top:678px" width="16" height="16"><path d="M6 4v7l4-3.500z" fill="#000"/></svg>
<div class="a raised" style="left:19px;top:678px;width:150px;height:16px"></div>
<div class="a" style="left:3px;top:694px;width:226px;height:1px;background:#404040"></div>
<div class="a" style="left:4px;top:694px;width:73px;height:19px;background:#D4D0C8;border:1px solid #808080;border-top:1px solid #404040;border-radius:0 0 4px 4px"></div>
<svg style="left:9px;top:696px" width="16" height="16" viewBox="0 0 16 16" ><circle cx="8" cy="8" r="7" fill="#C8D8F0" opacity=".7"/><rect x="3" y="2" width="7" height="9" fill="#E8F0FC" stroke="#7898D0"/><rect x="6" y="5" width="7" height="9" fill="#fff" stroke="#7898D0"/><path d="M7.500 7.500h4M7.500 9.500h4M7.500 11.500h4" stroke="#A8C0E8"/></svg>
<div class="a s" style="left:27px;top:698px"><span class="c">交流</span>...</div>
<div class="a" style="left:77px;top:694px;width:74px;height:19px;background:#D4D0C8;border:1px solid #808080;border-top:1px solid #404040;border-radius:0 0 4px 4px"></div>
<svg style="left:82px;top:696px" width="16" height="16" viewBox="0 0 16 16" ><rect x=".500" y="1.500" width="15" height="13" fill="#fff" stroke="#2E6FD0"/><rect x=".500" y="1.500" width="15" height="3" fill="#2E6FD0"/><path d="M2 7h4M2 9.500h4M2 12h4" stroke="#2E6FD0" stroke-width="1.400"/><path d="M7.500 7h6M7.500 9.500h6" stroke="#8CA8E0" stroke-width="1.400"/><path d="M7.500 12h6" stroke="#E07028" stroke-width="1.600"/></svg>
<div class="a s" style="left:100px;top:698px"><span class="c">工程</span>...</div>
<div class="a" style="left:150px;top:694px;width:74px;height:19px;background:#fff;border:1px solid #808080;border-top:1px solid #fff;border-radius:0 0 4px 4px"></div>
<svg style="left:155px;top:696px" width="16" height="16" viewBox="0 0 16 16" ><rect x=".500" y="1.500" width="15" height="13" fill="#DCE8FA" stroke="#2E6FD0"/><rect x=".500" y="1.500" width="15" height="2.500" fill="#2E6FD0"/><path d="M2.500 6h3M2.500 8.500h3M2.500 11h3" stroke="#2E6FD0"/><path d="M6.500 7.500h4v-2.500l4 4l-4 4v-2.500h-4z" fill="#2FAE2F" stroke="#1E7A1E" stroke-width=".6"/></svg>
<div class="a s" style="left:173px;top:698px"><span class="c">节点</span>...</div>
<div class="a" style="left:237px;top:80px;width:785px;height:636px;border:1px solid #808080"></div>
<div class="a" style="left:238px;top:101px;width:783px;height:1px;background:#808080"></div>
<svg style="left:0;top:0" width="1024" height="110" fill="none" stroke="#808080"><path d="M240.500 101.500L258 84.500q1.500-1.500 3-1.500H315q3 0 3 3V101"/><path d="M318.5 101V86q0-3 3-3H350.5q3 0 3 3V101"/><path d="M354.5 101V86q0-3 3-3H386.5q3 0 3 3V101"/><path d="M390.5 101V86q0-3 3-3H423.5q3 0 3 3V101"/><path d="M427.5 101V86q0-3 3-3H459.5q3 0 3 3V101"/><path d="M463.5 101V86q0-3 3-3H495.5q3 0 3 3V101"/><path d="M549.5 101V86q0-3 3-3H581.5q3 0 3 3V101"/><path d="M585.5 101V86q0-3 3-3H617.5q3 0 3 3V101"/><path d="M621.5 101V86q0-3 3-3H653.5q3 0 3 3V101"/><path d="M483 102.500L501 83.500H546.500q2.500 0 2.500 2.500V102.500z" fill="#D4D0C8" stroke="none"/><path d="M483.500 101.500L501.500 83.500" stroke="#707070"/><path d="M485 101.500L502.500 84.500H546q2 0 2 2V102" stroke="#fff"/><path d="M549.500 86V101.500" stroke="#707070"/><path d="M485 101.500h64" stroke="#D4D0C8" stroke-width="1.200"/></svg>
<div class="a c" style="left:262px;top:86px;line-height:12px;white-space:nowrap">概要统计</div>
<div class="a c" style="left:323px;top:86px;line-height:12px;white-space:nowrap">诊断</div>
<div class="a c" style="left:359px;top:86px;line-height:12px;white-space:nowrap">端点</div>
<div class="a c" style="left:395px;top:86px;line-height:12px;white-space:nowrap">协议</div>
<div class="a c" style="left:431px;top:86px;line-height:12px;white-space:nowrap">会话</div>
<div class="a c" style="left:467px;top:86px;line-height:12px;white-space:nowrap">矩阵</div>
<div class="a c b" style="left:503px;top:86px;line-height:12px;white-space:nowrap;letter-spacing:1px">数据包</div>
<div class="a c" style="left:555px;top:86px;line-height:12px;white-space:nowrap">日志</div>
<div class="a c" style="left:591px;top:86px;line-height:12px;white-space:nowrap">图表</div>
<div class="a c" style="left:627px;top:86px;line-height:12px;white-space:nowrap">报表</div>
<svg style="left:996px;top:83px" width="22" height="12" fill="none" stroke="#000"><path d="M5.500 1.500v8l-4-4z"/><path d="M15.500 1.500v8l4-4z"/></svg>
<div class="a" style="left:266px;top:107px;width:1px;height:18px;background:#A6A29A"></div>
<div class="a" style="left:316px;top:107px;width:1px;height:18px;background:#A6A29A"></div>
<div class="a" style="left:427px;top:107px;width:1px;height:18px;background:#A6A29A"></div>
<div class="a" style="left:495px;top:107px;width:1px;height:18px;background:#A6A29A"></div>
<div class="a" style="left:530px;top:107px;width:1px;height:18px;background:#A6A29A"></div>
<div class="a" style="left:558px;top:107px;width:1px;height:18px;background:#A6A29A"></div>
<div class="a" style="left:586px;top:107px;width:1px;height:18px;background:#A6A29A"></div>
<svg style="left:244px;top:108px" width="16" height="16" viewBox="0 0 16 16" ><rect x="6.500" y="3.500" width="8" height="8" fill="#C0D4F4" stroke="#3C68B8"/><rect x="1.500" y="7.500" width="8" height="8" fill="#fff" stroke="#3C68B8"/><path d="M3 10h5M3 12.500h5M5.500 8v7" stroke="#E07028" stroke-width=".9"/><path d="M3 11.200h5M3 13.700h5" stroke="#3CA03C" stroke-width=".9"/><path d="M3 7l3-5l3 3l2-2" stroke="#3CA03C" stroke-width="1.600" fill="none"/><path d="M8 1h4v4z" fill="#3CA03C"/></svg>
<svg style="left:274px;top:108px" width="16" height="16" viewBox="0 0 16 16" ><circle cx="8" cy="8" r="7.3" fill="#2FAE2F"/><circle cx="7" cy="6" r="4.5" fill="#B8F08C" opacity=".55"/><path d="M3.5 8l4.5-4v2.5h4v3h-4v2.5z" fill="#fff"/></svg>
<svg style="left:296px;top:108px" width="16" height="16" viewBox="0 0 16 16" ><circle cx="8" cy="8" r="7.3" fill="#2FAE2F"/><circle cx="7" cy="6" r="4.5" fill="#B8F08C" opacity=".55"/><path d="M12.5 8l-4.5-4v2.5h-4v3h4v2.5z" fill="#fff"/></svg>
<div class="a" style="left:320px;top:105px;width:22px;height:22px;border:1px solid #0A246A;background:#C8D4EC"></div>
<div class="a" style="left:342px;top:105px;width:22px;height:22px;border:1px solid #0A246A;background:#C8D4EC"></div>
<div class="a" style="left:364px;top:105px;width:22px;height:22px;border:1px solid #0A246A;background:#C8D4EC"></div>
<svg style="left:323px;top:108px" width="16" height="16" viewBox="0 0 16 16" ><rect x=".500" y="1.500" width="15" height="13" fill="#fff" stroke="#5A7AC0"/><path d="M2 4.500h12M2 7h12M2 9.500h12M2 12h12" stroke="#6A8AD0" stroke-dasharray="3 1"/><path d="M2 5.700h12M2 10.700h12" stroke="#E0A070" stroke-dasharray="2 2"/></svg>
<svg style="left:345px;top:108px" width="16" height="16" viewBox="0 0 16 16" ><rect x="1.500" y=".500" width="13" height="15" fill="#fff" stroke="#5A7AC0"/><path d="M3 3h9M3 5.500h6M3 8h9M3 10.500h7M3 13h9" stroke="#6A8AD0"/><path d="M3 4.200h5M3 9.200h8M3 11.700h4" stroke="#E06090"/></svg>
<svg style="left:367px;top:108px" width="16" height="16" viewBox="0 0 16 16" ><rect x=".500" y="1.500" width="15" height="13" fill="#E8F0FC" stroke="#5A7AC0"/><path d="M5.500 5.500h-2v5.500h2.500v-3h-2.500M9 11l2-5.500l2 5.500M9.700 9h2.600" stroke="#3C60B0" fill="none" stroke-width="1.100"/></svg>
<svg style="left:395px;top:108px" width="16" height="16" viewBox="0 0 16 16" ><rect x="1.500" y="1.500" width="7" height="8" fill="#C8DCF8" stroke="#4A78C8"/><rect x="7.500" y="5.500" width="7" height="9" fill="#E8F0FC" stroke="#4A78C8"/><path d="M3 4h4M3 6.500h4M9 8.500h4M9 11h4" stroke="#4A78C8" stroke-width=".8"/><path d="M1 12h5l-1.500-2M15 3.500h-5l1.500 2" stroke="#2FAE2F" stroke-width="1.400" fill="none"/></svg>
<svg style="left:435px;top:108px" width="16" height="16" viewBox="0 0 16 16" ><path d="M1.500 3.500h10l-4 5v5l-2.500 1.500v-6.500z" fill="#A4B0E0" stroke="#5464A8"/><ellipse cx="6.500" cy="3.500" rx="5" ry="1.600" fill="#D8E0F8" stroke="#5464A8"/><path d="M12 1v6M9 4h6" stroke="#2FAE2F" stroke-width="2.400"/></svg>
<svg style="left:467px;top:108px" width="16" height="16" viewBox="0 0 16 16" ><rect x=".500" y="1.500" width="15" height="13" fill="#DCE8FA" stroke="#2E6FD0"/><rect x=".500" y="1.500" width="15" height="2.500" fill="#2E6FD0"/><path d="M2.500 6.500h2.500M2.500 9h2.500M2.500 11.500h2.500" stroke="#2E6FD0"/><path d="M14.500 7.500h-4v-2.500l-4 4l4 4v-2.500h4z" fill="#2FAE2F" stroke="#1E7A1E" stroke-width=".6"/></svg>
<svg style="left:503px;top:108px" width="16" height="16" viewBox="0 0 16 16" ><rect x="1.500" y=".500" width="13" height="15" fill="#E8F0FC" stroke="#4A78C8"/><rect x="1.500" y=".500" width="13" height="2.500" fill="#4A78C8"/><path d="M3.500 5.500h2M3.500 8.500h2M3.500 11.500h2" stroke="#E04020" stroke-width="1.600"/><path d="M7 5.500h6M7 8.500h6M7 11.500h6" stroke="#8CA8E0"/></svg>
<svg style="left:537px;top:108px" width="16" height="16" viewBox="0 0 16 16" ><rect x="1" y="3" width="13" height="9" fill="#3C9C3C" stroke="#1E641E"/><rect x="2.500" y="4.500" width="4" height="5" fill="#C8F0A0"/><path d="M3 6h3M3 8h3" stroke="#1E641E"/><rect x="8" y="5" width="3" height="3" fill="#F0D850"/><rect x="12" y="2" width="2.500" height="12" fill="#8CC850" stroke="#1E641E" stroke-width=".6"/><path d="M3 12v2M5 12v2M7 12v2M9 12v2" stroke="#C8A830"/><path d="M8 9h3v-3l5 4.500l-5 4.500v-3h-3z" fill="#F0D020" stroke="#907810" stroke-width=".7"/></svg>
<svg style="left:565px;top:108px" width="16" height="16" viewBox="0 0 16 16" ><path d="M1.500 6l3-4.500l3 1.500l-3 5z" fill="#C8D8F8" stroke="#5A7AC0"/><path d="M8.500 8v-2a2.500 2.500 0 0 1 5 0v2" stroke="#A08818" stroke-width="1.600" fill="none"/><rect x="6.500" y="8" width="9" height="7.500" rx="1" fill="#F0D040" stroke="#A08818"/><path d="M11 10.500v3" stroke="#604808" stroke-width="1.600"/></svg>
<svg style="left:593px;top:108px" width="16" height="16" viewBox="0 0 16 16" ><path d="M2.500 1.500h8l3 3v10h-11z" fill="#DCE8FA" stroke="#5A7AC0"/><path d="M5 8a3 3 0 0 1 5.500-1.500M11 9.500a3 3 0 0 1-5.500 1" stroke="#2FAE2F" stroke-width="1.700" fill="none"/><path d="M11.500 4.500v3h-3zM4.500 13v-3h3z" fill="#2FAE2F"/></svg>
<svg style="left:416px;top:115px" width="5" height="3"><path d="M0 0h5l-2.500 3z" fill="#000"/></svg>
<svg style="left:454px;top:115px" width="5" height="3"><path d="M0 0h5l-2.500 3z" fill="#000"/></svg>
<svg style="left:484px;top:115px" width="5" height="3"><path d="M0 0h5l-2.500 3z" fill="#000"/></svg>
<svg style="left:519px;top:115px" width="5" height="3"><path d="M0 0h5l-2.500 3z" fill="#000"/></svg>
<div class="a" style="left:803px;top:105px;width:216px;height:22px;border:1px solid #9CA4B4;background:#E4E7EC"></div>
<div class="a" style="left:799px;top:107px;width:1px;height:18px;background:#A6A29A"></div>
<div class="a b" style="left:809px;top:111px;font-size:11px;letter-spacing:.4px;white-space:nowrap;line-height:12px">01:80:C2:00:00:00\<span class="c" style="letter-spacing:1px;font-weight:bold">数据包</span>:</div>
<div class="a" style="left:988px;top:106px;width:30px;height:20px;background:#fff"></div>
<div class="a" style="left:995px;top:110px;font:11px/12px 'Liberation Sans',sans-serif">126</div>
<div class="a" style="left:238px;top:129px;width:767px;height:297px;background:#fff;overflow:hidden">
<div class="a" style="left:0;top:0;width:767px;height:17px;background:#D4D0C8;border-top:1px solid #808080;border-bottom:1px solid #808080"></div>
<div class="a" style="left:23px;top:1px;width:1px;height:15px;background:#808080"></div>
<div class="a" style="left:23px;top:17px;width:1px;height:280px;background:#DCDAD4"></div>
<div class="a" style="left:143px;top:1px;width:1px;height:15px;background:#808080"></div>
<div class="a" style="left:143px;top:17px;width:1px;height:280px;background:#DCDAD4"></div>
<div class="a" style="left:288px;top:1px;width:1px;height:15px;background:#808080"></div>
<div class="a" style="left:288px;top:17px;width:1px;height:280px;background:#DCDAD4"></div>
<div class="a" style="left:479px;top:1px;width:1px;height:15px;background:#808080"></div>
<div class="a" style="left:479px;top:17px;width:1px;height:280px;background:#DCDAD4"></div>
<div class="a" style="left:539px;top:1px;width:1px;height:15px;background:#808080"></div>
<div class="a" style="left:539px;top:17px;width:1px;height:280px;background:#DCDAD4"></div>
<div class="a" style="left:584px;top:1px;width:1px;height:15px;background:#808080"></div>
<div class="a" style="left:584px;top:17px;width:1px;height:280px;background:#DCDAD4"></div>
<div class="a c" style="left:24px;top:3px;width:113px;text-align:right;line-height:12px;white-space:nowrap">绝对时间</div>
<div class="a c" style="left:149px;top:3px;line-height:12px;white-space:nowrap">源</div>
<div class="a c" style="left:294px;top:3px;line-height:12px;white-space:nowrap">目标</div>
<div class="a c" style="left:484px;top:3px;line-height:12px;white-space:nowrap">协议</div>
<div class="a c" style="left:540px;top:3px;width:39px;text-align:right;line-height:12px;white-space:nowrap">大小</div>
<div class="a c" style="left:591px;top:3px;line-height:12px;white-space:nowrap">概要</div>
<div class="a" style="left:0;top:33px;width:767px;height:1px;background:#DCDAD4"></div>
<div class="a m" style="left:0;width:18px;text-align:right;top:18px;line-height:17px">5</div>
<div class="a m" style="left:32px;top:18px;line-height:17px">10:14:08.790117</div>
<div class="a m" style="left:149px;top:18px;line-height:17px">Cisco:28:16:9E</div>
<div class="a m" style="left:294px;top:18px;line-height:17px">01:80:C2:00:00:00</div>
<div class="a m" style="left:484px;color:#68A838;top:18px;line-height:17px">STP</div>
<div class="a m" style="left:540px;width:40px;text-align:right;top:18px;line-height:17px">64</div>
<div class="a m" style="left:591px;color:#DC6CB8;top:18px;line-height:17px"><span class="c">从</span>&nbsp;00:0D:65:28:16:9E&nbsp;<span class="c">到</span>&nbsp;0</div>
<div class="a" style="left:0;top:50px;width:767px;height:1px;background:#DCDAD4"></div>
<div class="a m" style="left:0;width:18px;text-align:right;top:35px;line-height:17px">16</div>
<div class="a m" style="left:32px;top:35px;line-height:17px">10:14:10.790121</div>
<div class="a m" style="left:149px;top:35px;line-height:17px">Cisco:28:16:9E</div>
<div class="a m" style="left:294px;top:35px;line-height:17px">01:80:C2:00:00:00</div>
<div class="a m" style="left:484px;color:#68A838;top:35px;line-height:17px">STP</div>
<div class="a m" style="left:540px;width:40px;text-align:right;top:35px;line-height:17px">64</div>
<div class="a m" style="left:591px;color:#DC6CB8;top:35px;line-height:17px"><span class="c">从</span>&nbsp;00:0D:65:28:16:9E&nbsp;<span class="c">到</span>&nbsp;0</div>
<div class="a" style="left:0;top:67px;width:767px;height:1px;background:#DCDAD4"></div>
<div class="a m" style="left:0;width:18px;text-align:right;top:52px;line-height:17px">25</div>
<div class="a m" style="left:32px;top:52px;line-height:17px">10:14:12.790167</div>
<div class="a m" style="left:149px;top:52px;line-height:17px">Cisco:28:16:9E</div>
<div class="a m" style="left:294px;top:52px;line-height:17px">01:80:C2:00:00:00</div>
<div class="a m" style="left:484px;color:#68A838;top:52px;line-height:17px">STP</div>
<div class="a m" style="left:540px;width:40px;text-align:right;top:52px;line-height:17px">64</div>
<div class="a m" style="left:591px;color:#DC6CB8;top:52px;line-height:17px"><span class="c">从</span>&nbsp;00:0D:65:28:16:9E&nbsp;<span class="c">到</span>&nbsp;0</div>
<div class="a" style="left:0;top:67px;width:767px;height:18px;background:#A8B0D4;border-top:1px solid #6C749C;border-bottom:1px solid #6C749C"></div>
<div class="a" style="left:23px;top:68px;width:1px;height:17px;background:#8088B8"></div>
<div class="a" style="left:143px;top:68px;width:1px;height:17px;background:#8088B8"></div>
<div class="a" style="left:288px;top:68px;width:1px;height:17px;background:#8088B8"></div>
<div class="a" style="left:479px;top:68px;width:1px;height:17px;background:#8088B8"></div>
<div class="a" style="left:539px;top:68px;width:1px;height:17px;background:#8088B8"></div>
<div class="a" style="left:584px;top:68px;width:1px;height:17px;background:#8088B8"></div>
<div class="a m" style="left:0;width:18px;text-align:right;top:69px;line-height:17px">28</div>
<div class="a m" style="left:32px;top:69px;line-height:17px">10:14:14.790143</div>
<div class="a m" style="left:149px;top:69px;line-height:17px">Cisco:28:16:9E</div>
<div class="a m" style="left:294px;top:69px;line-height:17px">01:80:C2:00:00:00</div>
<div class="a m" style="left:484px;color:#68A838;top:69px;line-height:17px">STP</div>
<div class="a m" style="left:540px;width:40px;text-align:right;top:69px;line-height:17px">64</div>
<div class="a m" style="left:591px;color:#DC6CB8;top:69px;line-height:17px"><span class="c">从</span>&nbsp;00:0D:65:28:16:9E&nbsp;<span class="c">到</span>&nbsp;0</div>
<div class="a" style="left:0;top:101px;width:767px;height:1px;background:#DCDAD4"></div>
<div class="a m" style="left:0;width:18px;text-align:right;top:86px;line-height:17px">32</div>
<div class="a m" style="left:32px;top:86px;line-height:17px">10:14:16.790096</div>
<div class="a m" style="left:149px;top:86px;line-height:17px">Cisco:28:16:9E</div>
<div class="a m" style="left:294px;top:86px;line-height:17px">01:80:C2:00:00:00</div>
<div class="a m" style="left:484px;color:#68A838;top:86px;line-height:17px">STP</div>
<div class="a m" style="left:540px;width:40px;text-align:right;top:86px;line-height:17px">64</div>
<div class="a m" style="left:591px;color:#DC6CB8;top:86px;line-height:17px"><span class="c">从</span>&nbsp;00:0D:65:28:16:9E&nbsp;<span class="c">到</span>&nbsp;0</div>
<div class="a" style="left:0;top:118px;width:767px;height:1px;background:#DCDAD4"></div>
<div class="a m" style="left:0;width:18px;text-align:right;top:103px;line-height:17px">34</div>
<div class="a m" style="left:32px;top:103px;line-height:17px">10:14:18.790006</div>
<div class="a m" style="left:149px;top:103px;line-height:17px">Cisco:28:16:9E</div>
<div class="a m" style="left:294px;top:103px;line-height:17px">01:80:C2:00:00:00</div>
<div class="a m" style="left:484px;color:#68A838;top:103px;line-height:17px">STP</div>
<div class="a m" style="left:540px;width:40px;text-align:right;top:103px;line-height:17px">64</div>
<div class="a m" style="left:591px;color:#DC6CB8;top:103px;line-height:17px"><span class="c">从</span>&nbsp;00:0D:65:28:16:9E&nbsp;<span class="c">到</span>&nbsp;0</div>
<div class="a" style="left:0;top:135px;width:767px;height:1px;background:#DCDAD4"></div>
<div class="a m" style="left:0;width:18px;text-align:right;top:120px;line-height:17px">35</div>
<div class="a m" style="left:32px;top:120px;line-height:17px">10:14:20.789702</div>
<div class="a m" style="left:149px;top:120px;line-height:17px">Cisco:28:16:9E</div>
<div class="a m" style="left:294px;top:120px;line-height:17px">01:80:C2:00:00:00</div>
<div class="a m" style="left:484px;color:#68A838;top:120px;line-height:17px">STP</div>
<div class="a m" style="left:540px;width:40px;text-align:right;top:120px;line-height:17px">64</div>
<div class="a m" style="left:591px;color:#DC6CB8;top:120px;line-height:17px"><span class="c">从</span>&nbsp;00:0D:65:28:16:9E&nbsp;<span class="c">到</span>&nbsp;0</div>
<div class="a" style="left:0;top:152px;width:767px;height:1px;background:#DCDAD4"></div>
<div class="a m" style="left:0;width:18px;text-align:right;top:137px;line-height:17px">36</div>
<div class="a m" style="left:32px;top:137px;line-height:17px">10:14:22.789858</div>
<div class="a m" style="left:149px;top:137px;line-height:17px">Cisco:28:16:9E</div>
<div class="a m" style="left:294px;top:137px;line-height:17px">01:80:C2:00:00:00</div>
<div class="a m" style="left:484px;color:#68A838;top:137px;line-height:17px">STP</div>
<div class="a m" style="left:540px;width:40px;text-align:right;top:137px;line-height:17px">64</div>
<div class="a m" style="left:591px;color:#DC6CB8;top:137px;line-height:17px"><span class="c">从</span>&nbsp;00:0D:65:28:16:9E&nbsp;<span class="c">到</span>&nbsp;0</div>
<div class="a" style="left:0;top:169px;width:767px;height:1px;background:#DCDAD4"></div>
<div class="a m" style="left:0;width:18px;text-align:right;top:154px;line-height:17px">37</div>
<div class="a m" style="left:32px;top:154px;line-height:17px">10:14:24.789763</div>
<div class="a m" style="left:149px;top:154px;line-height:17px">Cisco:28:16:9E</div>
<div class="a m" style="left:294px;top:154px;line-height:17px">01:80:C2:00:00:00</div>
<div class="a m" style="left:484px;color:#68A838;top:154px;line-height:17px">STP</div>
<div class="a m" style="left:540px;width:40px;text-align:right;top:154px;line-height:17px">64</div>
<div class="a m" style="left:591px;color:#DC6CB8;top:154px;line-height:17px"><span class="c">从</span>&nbsp;00:0D:65:28:16:9E&nbsp;<span class="c">到</span>&nbsp;0</div>
<div class="a" style="left:0;top:186px;width:767px;height:1px;background:#DCDAD4"></div>
<div class="a m" style="left:0;width:18px;text-align:right;top:171px;line-height:17px">38</div>
<div class="a m" style="left:32px;top:171px;line-height:17px">10:14:26.795728</div>
<div class="a m" style="left:149px;top:171px;line-height:17px">Cisco:28:16:9E</div>
<div class="a m" style="left:294px;top:171px;line-height:17px">01:80:C2:00:00:00</div>
<div class="a m" style="left:484px;color:#68A838;top:171px;line-height:17px">STP</div>
<div class="a m" style="left:540px;width:40px;text-align:right;top:171px;line-height:17px">64</div>
<div class="a m" style="left:591px;color:#DC6CB8;top:171px;line-height:17px"><span class="c">从</span>&nbsp;00:0D:65:28:16:9E&nbsp;<span class="c">到</span>&nbsp;0</div>
<div class="a" style="left:0;top:203px;width:767px;height:1px;background:#DCDAD4"></div>
<div class="a m" style="left:0;width:18px;text-align:right;top:188px;line-height:17px">47</div>
<div class="a m" style="left:32px;top:188px;line-height:17px">10:14:28.796052</div>
<div class="a m" style="left:149px;top:188px;line-height:17px">Cisco:28:16:9E</div>
<div class="a m" style="left:294px;top:188px;line-height:17px">01:80:C2:00:00:00</div>
<div class="a m" style="left:484px;color:#68A838;top:188px;line-height:17px">STP</div>
<div class="a m" style="left:540px;width:40px;text-align:right;top:188px;line-height:17px">64</div>
<div class="a m" style="left:591px;color:#DC6CB8;top:188px;line-height:17px"><span class="c">从</span>&nbsp;00:0D:65:28:16:9E&nbsp;<span class="c">到</span>&nbsp;0</div>
<div class="a" style="left:0;top:220px;width:767px;height:1px;background:#DCDAD4"></div>
<div class="a m" style="left:0;width:18px;text-align:right;top:205px;line-height:17px">52</div>
<div class="a m" style="left:32px;top:205px;line-height:17px">10:14:30.796035</div>
<div class="a m" style="left:149px;top:205px;line-height:17px">Cisco:28:16:9E</div>
<div class="a m" style="left:294px;top:205px;line-height:17px">01:80:C2:00:00:00</div>
<div class="a m" style="left:484px;color:#68A838;top:205px;line-height:17px">STP</div>
<div class="a m" style="left:540px;width:40px;text-align:right;top:205px;line-height:17px">64</div>
<div class="a m" style="left:591px;color:#DC6CB8;top:205px;line-height:17px"><span class="c">从</span>&nbsp;00:0D:65:28:16:9E&nbsp;<span class="c">到</span>&nbsp;0</div>
<div class="a" style="left:0;top:237px;width:767px;height:1px;background:#DCDAD4"></div>
<div class="a m" style="left:0;width:18px;text-align:right;top:222px;line-height:17px">55</div>
<div class="a m" style="left:32px;top:222px;line-height:17px">10:14:32.796303</div>
<div class="a m" style="left:149px;top:222px;line-height:17px">Cisco:28:16:9E</div>
<div class="a m" style="left:294px;top:222px;line-height:17px">01:80:C2:00:00:00</div>
<div class="a m" style="left:484px;color:#68A838;top:222px;line-height:17px">STP</div>
<div class="a m" style="left:540px;width:40px;text-align:right;top:222px;line-height:17px">64</div>
<div class="a m" style="left:591px;color:#DC6CB8;top:222px;line-height:17px"><span class="c">从</span>&nbsp;00:0D:65:28:16:9E&nbsp;<span class="c">到</span>&nbsp;0</div>
<div class="a" style="left:0;top:254px;width:767px;height:1px;background:#DCDAD4"></div>
<div class="a m" style="left:0;width:18px;text-align:right;top:239px;line-height:17px">56</div>
<div class="a m" style="left:32px;top:239px;line-height:17px">10:14:34.796170</div>
<div class="a m" style="left:149px;top:239px;line-height:17px">Cisco:28:16:9E</div>
<div class="a m" style="left:294px;top:239px;line-height:17px">01:80:C2:00:00:00</div>
<div class="a m" style="left:484px;color:#68A838;top:239px;line-height:17px">STP</div>
<div class="a m" style="left:540px;width:40px;text-align:right;top:239px;line-height:17px">64</div>
<div class="a m" style="left:591px;color:#DC6CB8;top:239px;line-height:17px"><span class="c">从</span>&nbsp;00:0D:65:28:16:9E&nbsp;<span class="c">到</span>&nbsp;0</div>
<div class="a" style="left:0;top:271px;width:767px;height:1px;background:#DCDAD4"></div>
<div class="a m" style="left:0;width:18px;text-align:right;top:256px;line-height:17px">57</div>
<div class="a m" style="left:32px;top:256px;line-height:17px">10:14:36.803317</div>
<div class="a m" style="left:149px;top:256px;line-height:17px">Cisco:28:16:9E</div>
<div class="a m" style="left:294px;top:256px;line-height:17px">01:80:C2:00:00:00</div>
<div class="a m" style="left:484px;color:#68A838;top:256px;line-height:17px">STP</div>
<div class="a m" style="left:540px;width:40px;text-align:right;top:256px;line-height:17px">64</div>
<div class="a m" style="left:591px;color:#DC6CB8;top:256px;line-height:17px"><span class="c">从</span>&nbsp;00:0D:65:28:16:9E&nbsp;<span class="c">到</span>&nbsp;0</div>
<div class="a" style="left:0;top:288px;width:767px;height:1px;background:#DCDAD4"></div>
<div class="a m" style="left:0;width:18px;text-align:right;top:273px;line-height:17px">59</div>
<div class="a m" style="left:32px;top:273px;line-height:17px">10:14:38.803581</div>
<div class="a m" style="left:149px;top:273px;line-height:17px">Cisco:28:16:9E</div>
<div class="a m" style="left:294px;top:273px;line-height:17px">01:80:C2:00:00:00</div>
<div class="a m" style="left:484px;color:#68A838;top:273px;line-height:17px">STP</div>
<div class="a m" style="left:540px;width:40px;text-align:right;top:273px;line-height:17px">64</div>
<div class="a m" style="left:591px;color:#DC6CB8;top:273px;line-height:17px"><span class="c">从</span>&nbsp;00:0D:65:28:16:9E&nbsp;<span class="c">到</span>&nbsp;0</div>
<div class="a" style="left:0;top:305px;width:767px;height:1px;background:#DCDAD4"></div>
<div class="a m" style="left:0;width:18px;text-align:right;top:290px;line-height:17px">60</div>
<div class="a m" style="left:32px;top:290px;line-height:17px">10:14:40.804395</div>
<div class="a m" style="left:149px;top:290px;line-height:17px">Cisco:28:16:9E</div>
<div class="a m" style="left:294px;top:290px;line-height:17px">01:80:C2:00:00:00</div>
<div class="a m" style="left:484px;color:#68A838;top:290px;line-height:17px">STP</div>
<div class="a m" style="left:540px;width:40px;text-align:right;top:290px;line-height:17px">64</div>
<div class="a m" style="left:591px;color:#DC6CB8;top:290px;line-height:17px"><span class="c">从</span>&nbsp;00:0D:65:28:16:9E&nbsp;<span class="c">到</span>&nbsp;0</div>
</div>
<div class="a dither" style="left:1005px;top:130px;width:16px;height:296px"></div>
<div class="a raised" style="left:1005px;top:130px;width:16px;height:16px"></div><svg style="left:1005px;top:130px" width="16" height="16"><path d="M4 9h7l-3.500-4z" fill="#000"/></svg>
<div class="a raised" style="left:1005px;top:410px;width:16px;height:16px"></div><svg style="left:1005px;top:410px" width="16" height="16"><path d="M4 6h7l-3.500 4z" fill="#000"/></svg>
<div class="a raised" style="left:1005px;top:146px;width:16px;height:35px"></div>
<div class="a dither" style="left:238px;top:426px;width:767px;height:16px"></div>
<div class="a raised" style="left:238px;top:426px;width:16px;height:16px"></div><svg style="left:238px;top:426px" width="16" height="16"><path d="M9 4v7l-4-3.500z" fill="#000"/></svg>
<div class="a raised" style="left:989px;top:426px;width:16px;height:16px"></div><svg style="left:989px;top:426px" width="16" height="16"><path d="M6 4v7l4-3.500z" fill="#000"/></svg>
<div class="a raised" style="left:280px;top:426px;width:554px;height:16px"></div>
<div class="a" style="left:238px;top:445px;width:783px;height:1px;background:#808080"></div>
<div class="a" style="left:238px;top:447px;width:767px;height:214px;background:#fff;overflow:hidden">
<div class="a" style="left:11px;top:16px;width:1px;height:200px;background:repeating-linear-gradient(180deg,#808080 0 1px,transparent 1px 2px)"></div>
<div class="a" style="left:30px;top:19px;width:1px;height:63px;background:repeating-linear-gradient(180deg,#808080 0 1px,transparent 1px 2px)"></div>
<div class="a" style="left:30px;top:109px;width:1px;height:110px;background:repeating-linear-gradient(180deg,#808080 0 1px,transparent 1px 2px)"></div>
<div class="a" style="left:7px;top:5px;width:9px;height:9px;border:1px solid #808080;background:#fff"></div><div class="a" style="left:9px;top:9px;width:5px;height:1px;background:#000"></div>
<div class="a" style="left:17px;top:9px;width:5px;height:1px;background:repeating-linear-gradient(90deg,#808080 0 1px,transparent 1px 2px)"></div>
<svg style="left:22px;top:2px" width="16" height="16" viewBox="0 0 16 16" ><path d="M1 3.500q0-2 2-2h10q2 0 2 2" stroke="#4C88D4" stroke-width="1.400" fill="none"/><path d="M2.500 2.500h11" stroke="#B8D8F8" stroke-width="1.200"/><path d="M2 3.500h12" stroke="#4C88D4" stroke-width=".9"/><path d="M8 3v4" stroke="#3C78C8" stroke-width="1.600"/><rect x="6" y="6" width="4" height="4.500" rx="1" fill="#F0D040" stroke="#B09018"/><path d="M8 10.500v3" stroke="#3C78C8" stroke-width="1.600"/></svg>
<div class="a m b" style="left:42px;top:1px;line-height:18px;color:#103090;letter-spacing:-.2px"><span style="border-bottom:1px solid #103090;padding-bottom:0;line-height:12px"><span class="c" style="letter-spacing:3px;font-weight:bold">数据包信息</span>:</span></div>
<div class="a" style="left:30px;top:27px;width:11px;height:1px;background:repeating-linear-gradient(90deg,#808080 0 1px,transparent 1px 2px)"></div>
<svg style="left:41px;top:20px" width="16" height="16" viewBox="0 0 16 16" ><rect x="1.500" y="1.500" width="12" height="13" fill="#D0DCF8" stroke="#5878C8"/><path d="M3 4.500h9M3 7h9M3 9.500h5" stroke="#fff" stroke-width="1.400"/><rect x="8" y="9" width="6.500" height="6" rx="1.500" fill="#F0D040" stroke="#A08818"/></svg>
<div class="a m" style="left:60px;top:19px;line-height:18px;color:#808000"><span class="c">数据包编号</span>:</div>
<div class="a m" style="left:211px;top:19px;line-height:18px">000028</div>
<div class="a" style="left:30px;top:45px;width:11px;height:1px;background:repeating-linear-gradient(90deg,#808080 0 1px,transparent 1px 2px)"></div>
<svg style="left:41px;top:38px" width="16" height="16" viewBox="0 0 16 16" ><rect x="6.500" y="2.500" width="8" height="6" rx="2" fill="#F0D040" stroke="#A08818"/><rect x="1.500" y="6.500" width="9" height="7" rx="2" fill="#F0D040" stroke="#A08818"/><path d="M3.500 9h5M3.500 11h5" stroke="#C8A828"/></svg>
<div class="a m" style="left:60px;top:37px;line-height:18px;color:#808000"><span class="c">数据包长度</span>:</div>
<div class="a m" style="left:211px;top:37px;line-height:18px">64</div>
<div class="a" style="left:30px;top:63px;width:11px;height:1px;background:repeating-linear-gradient(90deg,#808080 0 1px,transparent 1px 2px)"></div>
<svg style="left:41px;top:56px" width="16" height="16" viewBox="0 0 16 16" ><rect x="6.500" y="2.500" width="8" height="6" rx="2" fill="#F0D040" stroke="#A08818"/><rect x="1.500" y="6.500" width="9" height="7" rx="2" fill="#F0D040" stroke="#A08818"/><path d="M3.500 9h5M3.500 11h5" stroke="#C8A828"/></svg>
<div class="a m" style="left:60px;top:55px;line-height:18px;color:#808000"><span class="c">捕获长度</span>:</div>
<div class="a m" style="left:211px;top:55px;line-height:18px">60</div>
<div class="a" style="left:30px;top:81px;width:11px;height:1px;background:repeating-linear-gradient(90deg,#808080 0 1px,transparent 1px 2px)"></div>
<svg style="left:41px;top:74px" width="16" height="16" viewBox="0 0 16 16" ><rect x="1.500" y="1.500" width="12" height="13" fill="#D0DCF8" stroke="#5878C8"/><path d="M3 4.500h9M3 7h9M3 9.500h5" stroke="#fff" stroke-width="1.400"/><rect x="8" y="9" width="6.500" height="6" rx="1.500" fill="#F0D040" stroke="#A08818"/></svg>
<div class="a m" style="left:60px;top:73px;line-height:18px;color:#808000"><span class="c">时间戳</span>:</div>
<div class="a m" style="left:211px;top:73px;line-height:18px">2007-11-21 10:14:14.790143</div>
<div class="a" style="left:7px;top:95px;width:9px;height:9px;border:1px solid #808080;background:#fff"></div><div class="a" style="left:9px;top:99px;width:5px;height:1px;background:#000"></div>
<div class="a" style="left:17px;top:99px;width:5px;height:1px;background:repeating-linear-gradient(90deg,#808080 0 1px,transparent 1px 2px)"></div>
<svg style="left:22px;top:92px" width="16" height="16" viewBox="0 0 16 16" ><path d="M1 3.500q0-2 2-2h10q2 0 2 2" stroke="#4C88D4" stroke-width="1.400" fill="none"/><path d="M2.500 2.500h11" stroke="#B8D8F8" stroke-width="1.200"/><path d="M2 3.500h12" stroke="#4C88D4" stroke-width=".9"/><path d="M8 3v4" stroke="#3C78C8" stroke-width="1.600"/><rect x="6" y="6" width="4" height="4.500" rx="1" fill="#F0D040" stroke="#B09018"/><path d="M8 10.500v3" stroke="#3C78C8" stroke-width="1.600"/></svg>
<div class="a m b" style="left:42px;top:91px;line-height:18px;color:#103090;letter-spacing:-.2px"><span style="border-bottom:1px solid #103090;padding-bottom:0;line-height:12px"><span class="c" style="letter-spacing:3px;font-weight:bold">以太网</span>&nbsp;-&nbsp;802.2</span></div>
<div class="a m" style="left:211px;top:91px;line-height:18px"><span style="color:#2E8040">[</span><span style="color:#5860A0">0</span><span style="color:#608068">/</span><span style="color:#D07050">17</span><span style="color:#2E8040">]</span></div>
<div class="a" style="left:30px;top:117px;width:11px;height:1px;background:repeating-linear-gradient(90deg,#808080 0 1px,transparent 1px 2px)"></div>
<svg style="left:41px;top:110px" width="16" height="16" viewBox="0 0 16 16" ><rect x=".500" y="2.500" width="12.500" height="10" fill="#3C9C3C" stroke="#1E641E"/><rect x="2" y="4" width="4" height="5.500" fill="#C8F0A0"/><path d="M2.500 5.500h3M2.500 7.500h3" stroke="#1E641E"/><rect x="7.500" y="4.500" width="3" height="3" fill="#F0D850"/><rect x="12" y="1.500" width="3" height="13" fill="#8CC850" stroke="#1E641E" stroke-width=".6"/></svg>
<div class="a m" style="left:60px;top:109px;line-height:18px;color:#808000"><span class="c">目标地址</span>:</div>
<div class="a m" style="left:211px;top:109px;line-height:18px">01:80:C2:00:00:00</div>
<div class="a m" style="left:351px;top:109px;line-height:18px"><span style="color:#2E8040">[</span><span style="color:#5860A0">0</span><span style="color:#608068">/</span><span style="color:#D07050">6</span><span style="color:#2E8040">]</span></div>
<div class="a" style="left:30px;top:135px;width:11px;height:1px;background:repeating-linear-gradient(90deg,#808080 0 1px,transparent 1px 2px)"></div>
<svg style="left:41px;top:128px" width="16" height="16" viewBox="0 0 16 16" ><rect x=".500" y="2.500" width="12.500" height="10" fill="#3C9C3C" stroke="#1E641E"/><rect x="2" y="4" width="4" height="5.500" fill="#C8F0A0"/><path d="M2.500 5.500h3M2.500 7.500h3" stroke="#1E641E"/><rect x="7.500" y="4.500" width="3" height="3" fill="#F0D850"/><rect x="12" y="1.500" width="3" height="13" fill="#8CC850" stroke="#1E641E" stroke-width=".6"/></svg>
<div class="a m" style="left:60px;top:127px;line-height:18px;color:#808000"><span class="c">源地址</span>:</div>
<div class="a m" style="left:211px;top:127px;line-height:18px">00:0D:65:28:16:9E</div>
<div class="a m" style="left:351px;top:127px;line-height:18px"><span style="color:#787878">(Cisco)</span>&nbsp;&nbsp;<span style="color:#2E8040">[</span><span style="color:#5860A0">6</span><span style="color:#608068">/</span><span style="color:#D07050">6</span><span style="color:#2E8040">]</span></div>
<div class="a" style="left:30px;top:153px;width:11px;height:1px;background:repeating-linear-gradient(90deg,#808080 0 1px,transparent 1px 2px)"></div>
<svg style="left:41px;top:146px" width="16" height="16" viewBox="0 0 16 16" ><rect x="6.500" y="2.500" width="8" height="6" rx="2" fill="#F0D040" stroke="#A08818"/><rect x="1.500" y="6.500" width="9" height="7" rx="2" fill="#F0D040" stroke="#A08818"/><path d="M3.500 9h5M3.500 11h5" stroke="#C8A828"/></svg>
<div class="a m" style="left:60px;top:145px;line-height:18px;color:#808000"><span class="c">长度</span>:</div>
<div class="a m" style="left:211px;top:145px;line-height:18px">38</div>
<div class="a m" style="left:351px;top:145px;line-height:18px"><span style="color:#2E8040">[</span><span style="color:#5860A0">12</span><span style="color:#608068">/</span><span style="color:#D07050">2</span><span style="color:#2E8040">]</span></div>
<div class="a" style="left:30px;top:171px;width:11px;height:1px;background:repeating-linear-gradient(90deg,#808080 0 1px,transparent 1px 2px)"></div>
<svg style="left:41px;top:164px" width="16" height="16" viewBox="0 0 16 16" ><rect x="3.500" y="3.500" width="10" height="9" rx="3.500" fill="#F0D040" stroke="#A08818"/><path d="M6 7h5M6 9h5" stroke="#C8A828"/></svg>
<div class="a m" style="left:60px;top:163px;line-height:18px;color:#808000"><span class="c">目标服务存取点</span>:</div>
<div class="a m" style="left:211px;top:163px;line-height:18px">0x42</div>
<div class="a m" style="left:351px;top:163px;line-height:18px"><span style="color:#2E8040">[</span><span style="color:#5860A0">14</span><span style="color:#608068">/</span><span style="color:#D07050">1</span><span style="color:#2E8040">]</span></div>
<div class="a" style="left:30px;top:189px;width:11px;height:1px;background:repeating-linear-gradient(90deg,#808080 0 1px,transparent 1px 2px)"></div>
<svg style="left:41px;top:182px" width="16" height="16" viewBox="0 0 16 16" ><rect x="3.500" y="3.500" width="10" height="9" rx="3.500" fill="#F0D040" stroke="#A08818"/><path d="M6 7h5M6 9h5" stroke="#C8A828"/></svg>
<div class="a m" style="left:60px;top:181px;line-height:18px;color:#808000"><span class="c">源服务存取点</span>:</div>
<div class="a m" style="left:211px;top:181px;line-height:18px">0x42</div>
<div class="a m" style="left:351px;top:181px;line-height:18px"><span style="color:#2E8040">[</span><span style="color:#5860A0">15</span><span style="color:#608068">/</span><span style="color:#D07050">1</span><span style="color:#2E8040">]</span></div>
<div class="a" style="left:30px;top:207px;width:11px;height:1px;background:repeating-linear-gradient(90deg,#808080 0 1px,transparent 1px 2px)"></div>
<svg style="left:41px;top:200px" width="16" height="16" viewBox="0 0 16 16" ><rect x="3.500" y="3.500" width="10" height="9" rx="3.500" fill="#F0D040" stroke="#A08818"/><path d="M6 7h5M6 9h5" stroke="#C8A828"/></svg>
<div class="a m" style="left:60px;top:199px;line-height:18px;color:#808000"><span class="c">控制</span>:</div>
<div class="a m" style="left:211px;top:199px;line-height:18px">3</div>
<div class="a m" style="left:351px;top:199px;line-height:18px"><span style="color:#2E8040">[</span><span style="color:#5860A0">16</span><span style="color:#608068">/</span><span style="color:#D07050">1</span><span style="color:#2E8040">]</span></div>
</div>
<div class="a dither" style="left:1005px;top:447px;width:16px;height:214px"></div>
<div class="a raised" style="left:1005px;top:447px;width:16px;height:16px"></div><svg style="left:1005px;top:447px" width="16" height="16"><path d="M4 9h7l-3.500-4z" fill="#000"/></svg>
<div class="a raised" style="left:1005px;top:645px;width:16px;height:16px"></div><svg style="left:1005px;top:645px" width="16" height="16"><path d="M4 6h7l-3.500 4z" fill="#000"/></svg>
<div class="a raised" style="left:1005px;top:463px;width:16px;height:125px"></div>
<div class="a" style="left:238px;top:661px;width:783px;height:1px;background:#fff"></div>
<div class="a" style="left:238px;top:664px;width:783px;height:1px;background:#808080"></div>
<div class="a" style="left:238px;top:665px;width:783px;height:49px;background:#fff;overflow:hidden">
<div class="a m b" style="left:5px;top:7px;line-height:14px;font-size:11px;letter-spacing:.4px;font-weight:normal;-webkit-text-stroke:.3px #000">0000</div>
<div class="a m b" style="left:48px;top:7px;line-height:14px;font-size:11px;letter-spacing:.4px;font-weight:normal;-webkit-text-stroke:.3px #000">01&nbsp;80&nbsp;C2&nbsp;00&nbsp;00&nbsp;00&nbsp;00&nbsp;0D&nbsp;65&nbsp;28&nbsp;16&nbsp;9E&nbsp;00&nbsp;26&nbsp;42&nbsp;42&nbsp;03&nbsp;00&nbsp;00&nbsp;00&nbsp;00&nbsp;00&nbsp;81&nbsp;46&nbsp;00</div>
<div class="a m b" style="left:589px;top:7px;line-height:14px;font-size:11px;letter-spacing:.4px;font-weight:normal;-webkit-text-stroke:.3px #000">........e(...&nbsp;BB.......F.</div>
<div class="a m b" style="left:5px;top:21px;line-height:14px;font-size:11px;letter-spacing:.4px;font-weight:normal;-webkit-text-stroke:.3px #000">0019</div>
<div class="a m b" style="left:48px;top:21px;line-height:14px;font-size:11px;letter-spacing:.4px;font-weight:normal;-webkit-text-stroke:.3px #000">05&nbsp;DC&nbsp;94&nbsp;A4&nbsp;00&nbsp;00&nbsp;00&nbsp;00&nbsp;04&nbsp;81&nbsp;46&nbsp;00&nbsp;0D&nbsp;65&nbsp;28&nbsp;16&nbsp;80&nbsp;80&nbsp;1E&nbsp;01&nbsp;00&nbsp;14&nbsp;00&nbsp;02&nbsp;00</div>
<div class="a m b" style="left:589px;top:21px;line-height:14px;font-size:11px;letter-spacing:.4px;font-weight:normal;-webkit-text-stroke:.3px #000">..........F..e(..........</div>
<div class="a m b" style="left:5px;top:35px;line-height:14px;font-size:11px;letter-spacing:.4px;font-weight:normal;-webkit-text-stroke:.3px #000">0032</div>
<div class="a m b" style="left:48px;top:35px;line-height:14px;font-size:11px;letter-spacing:.4px;font-weight:normal;-webkit-text-stroke:.3px #000">0F&nbsp;00&nbsp;00&nbsp;00&nbsp;00&nbsp;00&nbsp;00&nbsp;00&nbsp;00&nbsp;00</div>
<div class="a m b" style="left:589px;top:35px;line-height:14px;font-size:11px;letter-spacing:.4px;font-weight:normal;-webkit-text-stroke:.3px #000">..........</div>
<div class="a" style="left:41px;top:6px;width:1px;height:39px;background:#000060"></div>
<div class="a" style="left:581px;top:6px;width:1px;height:39px;background:#000060"></div>
</div>
<div class="a s" style="left:3px;top:723px"><span class="c">寻求帮助</span>,&nbsp;<span class="c">请按</span>&nbsp;F1</div>
<div class="a" style="left:799px;top:720px;width:224px;height:18px;border:1px solid;border-color:#BCB8B0 #E6E4DE #E6E4DE #BCB8B0"></div>
<div class="a s" style="left:836px;top:723px;color:#808080;text-shadow:1px 1px 0 #fff">D:\<span class="c">网络分析</span>\<span class="c">案例</span>\<span class="c">工程</span>&nbsp;1.cscproj</div>
<div class="a" style="left:0;top:739px;width:1024px;height:1px;background:#fff"></div>
<div class="a raised" style="left:2px;top:742px;width:47px;height:22px"></div>
<svg style="left:4px;top:745px" width="16" height="16" viewBox="0 0 16 16"><path d="M1 3q3-2 6 0l-1 5q-3-2-6 0z" fill="#E84820"/><path d="M8 3q3 2 6 0l-1 5q-3 2-6 0z" fill="#48B028"/><path d="M0 9q3-2 6 0l-1 5q-3-2-6 0z" fill="#2868D8"/><path d="M7 9q3 2 6 0l-1 5q-3 2-6 0z" fill="#F0C020"/></svg>
<div class="a c" style="left:22px;top:747px;line-height:12px;white-space:nowrap">开始</div>
<svg style="left:56px;top:746px" width="18" height="16" viewBox="0 0 18 16"><circle cx="9" cy="8.500" r="6.500" fill="#78C0F8" stroke="#2878D8" stroke-width="2"/><path d="M4 9h10" stroke="#2878D8" stroke-width="2"/><path d="M1 12q8-12 16-9" stroke="#F0C040" stroke-width="1.600" fill="none"/></svg>
<svg style="left:82px;top:746px" width="16" height="16" viewBox="0 0 16 16"><rect x="4" y="1" width="9" height="9" rx="1" fill="#78A8F0" stroke="#3868C0"/><path d="M8.500 10v3M4 14.500h9" stroke="#3868C0" stroke-width="1.600"/><path d="M2 8l4 4" stroke="#C0C8D8" stroke-width="2"/></svg>
<svg style="left:103px;top:746px" width="16" height="16" viewBox="0 0 16 16"><rect x="1.500" y="2.500" width="13" height="12" rx="2" fill="#78A8F0" stroke="#2858B0"/><rect x="4" y="5" width="8" height="7" fill="#fff" stroke="#2858B0"/><path d="M6 10l5-6" stroke="#2858B0" stroke-width="1.600"/></svg>
<div class="a b" style="left:131px;top:742px;font-size:13px;line-height:14px;font-family:'Liberation Sans',sans-serif">»</div>
<div class="a raised" style="left:144px;top:742px;width:159px;height:22px"></div>
<svg style="left:148px;top:745px" width="16" height="16" viewBox="0 0 16 16" ><circle cx="8" cy="8" r="7.300" fill="#3E9CF0"/><circle cx="9.500" cy="7.200" r="4.800" fill="#1E60C4"/><path d="M6 6.500q3.500-2 7 0M6 9q3.500 2 7 0M9.500 3v8.500" stroke="#8CC4F8" stroke-width=".9" fill="none"/><path d="M3.200 3.200a7 7 0 0 0 9 10.500" stroke="#A8DCFF" stroke-width="1.300" fill="none"/></svg>
<div class="a s" style="left:167px;top:747px">2006-10-13.cscproj&nbsp;...</div>
<div class="a" style="left:306px;top:742px;width:159px;height:22px;border:1px solid;border-color:#404040 #fff #fff #404040;box-shadow:inset 1px 1px 0 #808080;background:#EAE8E4"></div>
<svg style="left:311px;top:746px" width="16" height="16" viewBox="0 0 16 16" ><circle cx="8" cy="8" r="7.300" fill="#3E9CF0"/><circle cx="9.500" cy="7.200" r="4.800" fill="#1E60C4"/><path d="M6 6.500q3.500-2 7 0M6 9q3.500 2 7 0M9.500 3v8.500" stroke="#8CC4F8" stroke-width=".9" fill="none"/><path d="M3.200 3.200a7 7 0 0 0 9 10.500" stroke="#A8DCFF" stroke-width="1.300" fill="none"/></svg>
<div class="a s" style="left:330px;top:748px"><span class="c">工程</span>&nbsp;1.cscproj&nbsp;-&nbsp;<span class="c">科</span>...</div>
<div class="a raised" style="left:468px;top:742px;width:160px;height:22px"></div>
<svg style="left:472px;top:745px" width="16" height="16" viewBox="0 0 16 16" ><path d="M1 3.500q0-2 2-2h10q2 0 2 2" stroke="#4C88D4" stroke-width="1.400" fill="none"/><path d="M2.500 2.500h11" stroke="#B8D8F8" stroke-width="1.200"/><path d="M2 3.500h12" stroke="#4C88D4" stroke-width=".9"/><path d="M8 3v4" stroke="#3C78C8" stroke-width="1.600"/><rect x="6" y="6" width="4" height="4.500" rx="1" fill="#F0D040" stroke="#B09018"/><path d="M8 10.500v3" stroke="#3C78C8" stroke-width="1.600"/></svg>
<div class="a s" style="left:491px;top:747px"><span class="c">工程</span>&nbsp;1.cscproj&nbsp;-&nbsp;<span class="c">协</span>...</div>
<div class="a raised" style="left:632px;top:742px;width:160px;height:22px"></div>
<svg style="left:636px;top:745px" width="16" height="16" viewBox="0 0 16 16" ><circle cx="8" cy="8.500" r="6" fill="#78C0F8" stroke="#2878D8" stroke-width="1.800"/><path d="M3.500 9h9" stroke="#2878D8" stroke-width="1.800"/><path d="M.500 12q7-12 15-9" stroke="#F0C040" stroke-width="1.400" fill="none"/><rect x="9" y="1" width="6" height="7" fill="#fff" stroke="#8090B0" stroke-width=".6"/></svg>
<div class="a s" style="left:655px;top:747px"><span class="c">网关不停的发</span>arp<span class="c">请求</span>...</div>
<div class="a" style="left:936px;top:743px;width:2px;height:21px;border-left:1px solid #808080;border-right:1px solid #fff"></div>
<svg style="left:915px;top:747px" width="20" height="14" viewBox="0 0 20 14"><rect x=".500" y="3.500" width="18" height="9" fill="#E8E8E8" stroke="#404040"/><path d="M2 6h15M2 8h15" stroke="#404040" stroke-dasharray="1 1"/><path d="M4 10.500h11" stroke="#404040"/><path d="M9 3.500q0-3 4-3" stroke="#404040" fill="none"/></svg>
<div class="a" style="left:943px;top:742px;width:79px;height:22px;border:1px solid;border-color:#808080 #fff #fff #808080"></div>
<div class="a b" style="left:948px;top:746px;font-size:13px;line-height:14px;font-family:'Liberation Sans',sans-serif">«</div>
<svg style="left:960px;top:745px" width="17" height="18" viewBox="0 0 17 18"><ellipse cx="8.500" cy="10" rx="5.500" ry="6.500" fill="#181818"/><ellipse cx="8.500" cy="11.500" rx="3.300" ry="4.300" fill="#fff"/><circle cx="8.500" cy="4.500" r="3.800" fill="#181818"/><circle cx="7" cy="4" r="1" fill="#fff"/><circle cx="10" cy="4" r="1" fill="#fff"/><ellipse cx="8.500" cy="6.300" rx="2" ry=".900" fill="#F0A020"/><path d="M3.500 8.500q5 2.500 10 0" stroke="#E02020" stroke-width="1.800" fill="none"/><ellipse cx="5" cy="16.500" rx="2.500" ry="1.200" fill="#F0A020"/><ellipse cx="12" cy="16.500" rx="2.500" ry="1.200" fill="#F0A020"/></svg>
<div class="a s" style="left:984px;top:749px;font-size:11px;letter-spacing:-.6px">13:16</div>
</body></html>
